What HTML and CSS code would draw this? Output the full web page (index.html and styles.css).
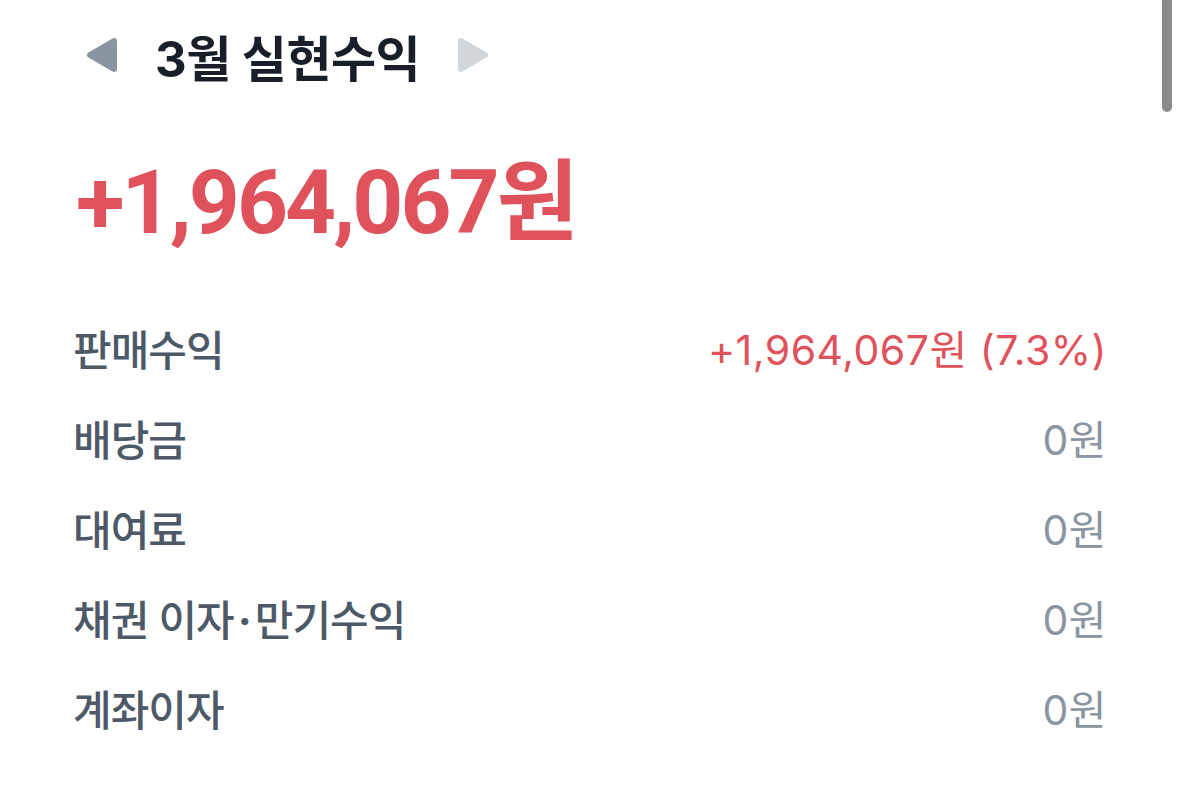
FILE: index.html
```html
<!doctype html>
<html lang="ko">
<head>
    <meta charset="utf-8">
    <title>실현수익</title>
    <link rel="stylesheet" href="styles.css">
</head>

<body>
    <div id="page">
        <!-- month switcher -->
        <div class="month-nav">
            <button class="arrow" aria-label="이전 달">
                <svg width="34" height="36" viewBox="0 0 34 36">
                    <polygon points="5,18 29,4 29,32" fill="#8b95a1" stroke="#8b95a1" stroke-width="6" stroke-linejoin="round"/>
                </svg>
            </button>
            <h1 class="title">3월 실현수익</h1>
            <button class="arrow" aria-label="다음 달">
                <svg width="34" height="36" viewBox="0 0 34 36">
                    <polygon points="29,18 5,4 5,32" fill="#d1d6db" stroke="#d1d6db" stroke-width="6" stroke-linejoin="round"/>
                </svg>
            </button>
        </div>

        <div class="total">+1,964,067원</div>

        <!-- breakdown -->
        <ul class="rows">
            <li class="row">
                <span class="label">판매수익</span>
                <span class="value plus">+1,964,067원 (7.3%)</span>
            </li>
            <li class="row">
                <span class="label">배당금</span>
                <span class="value">0원</span>
            </li>
            <li class="row">
                <span class="label">대여료</span>
                <span class="value">0원</span>
            </li>
            <li class="row">
                <span class="label">채권 이자<span class="dot">·</span>만기수익</span>
                <span class="value">0원</span>
            </li>
            <li class="row">
                <span class="label">계좌이자</span>
                <span class="value">0원</span>
            </li>
        </ul>

        <div class="scrollbar"></div>
    </div>
</body>

</html>
```

FILE: styles.css
```css
html, body {
    margin: 0;
    background-color: #ffffff;
    font-family: "Inter", "Noto Sans CJK KR", sans-serif;
}

#page {
    padding: 15px 72px 0 73px;
}

.month-nav {
    display: flex;
    align-items: center;
    gap: 36px;
    padding-left: 12px;
    height: 80px;
}

.arrow {
    border: none;
    background: none;
    padding: 0;
    display: flex;
    cursor: pointer;
}

.title {
    margin: 0;
    font-size: 49px;
    font-weight: 700;
    color: #191f28;
    letter-spacing: -0.5px;
}

.total {
    margin-top: 48px;
    padding-left: 3px;
    font-family: "Roboto", "Noto Sans CJK KR", sans-serif;
    font-size: 89px;
    font-weight: 700;
    color: #e0525b;
    letter-spacing: -2.9px;
    line-height: 120px;
}

.rows {
    list-style: none;
    margin: 39px 0 0 0;
    padding: 0;
}

.row {
    display: flex;
    justify-content: space-between;
    align-items: center;
    height: 90px;
}

.label {
    font-size: 42px;
    font-weight: 500;
    color: #4e5968;
    letter-spacing: -1px;
}

.label .dot {
    font-weight: 700;
    padding: 0 4px;
}

.value {
    font-size: 41px;
    color: #8b95a1;
    letter-spacing: 0.5px;
}

.value.plus {
    color: #e0525b;
}

.scrollbar {
    position: absolute;
    top: 0;
    right: 7px;
    width: 10px;
    height: 112px;
    border-radius: 0 0 5px 5px;
    background-color: #8a8a8a;
}
```
